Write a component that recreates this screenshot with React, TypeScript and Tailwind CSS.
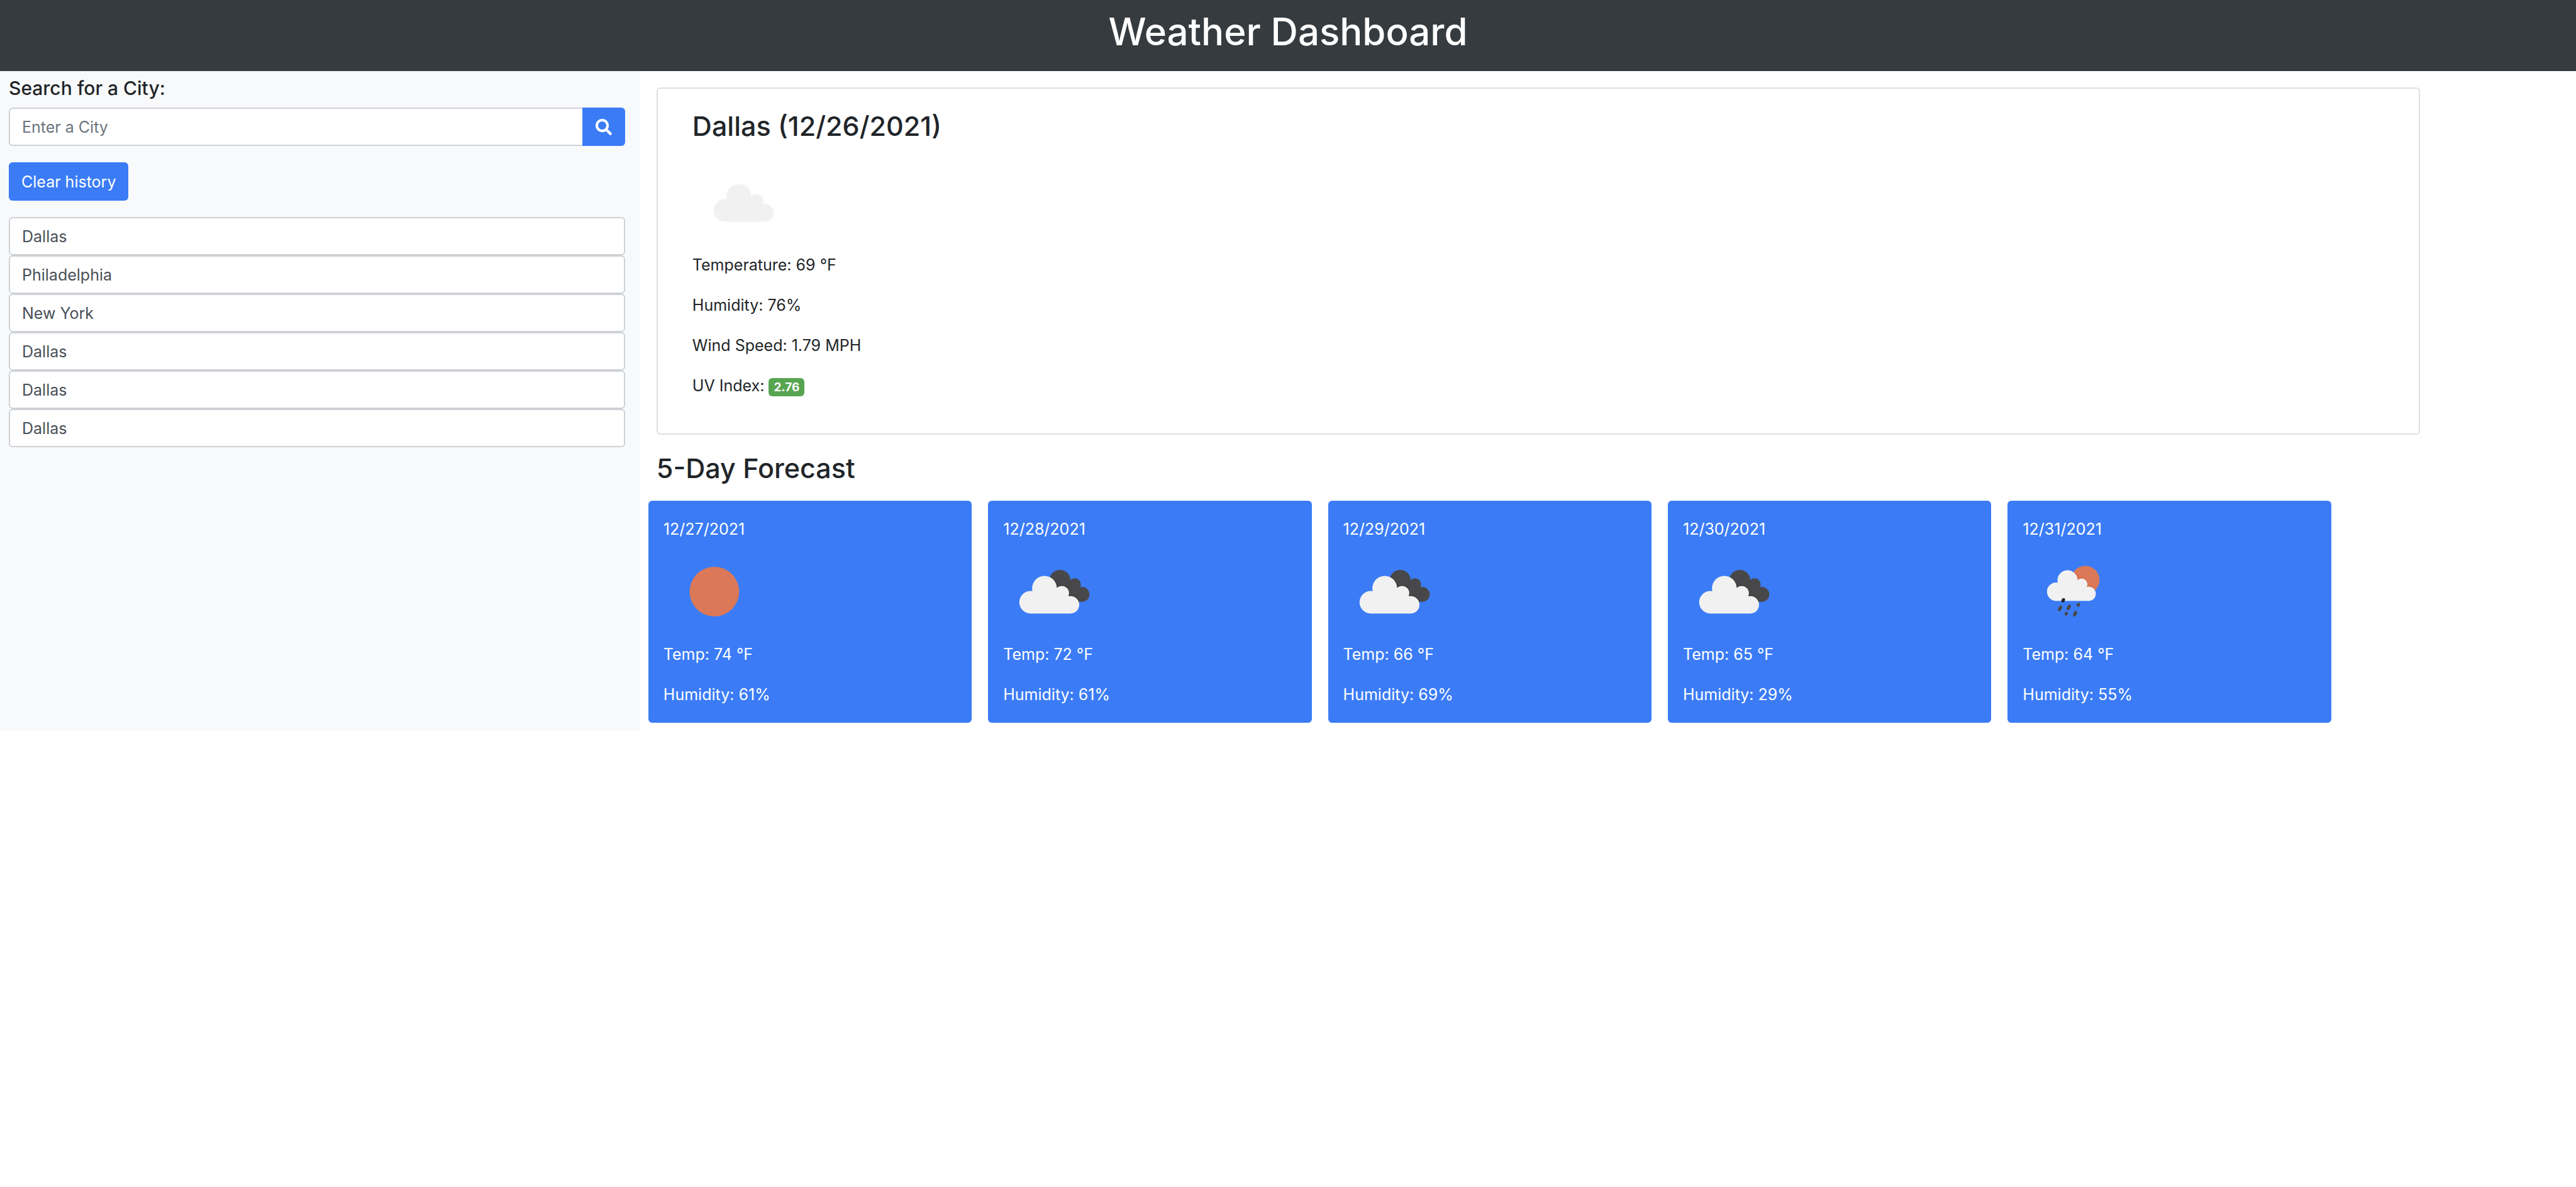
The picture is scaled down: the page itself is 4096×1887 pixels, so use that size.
import React from "react";
import { FaSearch } from "react-icons/fa";

type Sky = "clear" | "scattered" | "broken" | "rain";

const history = ["Dallas", "Philadelphia", "New York", "Dallas", "Dallas", "Dallas"];

const forecast: { date: string; sky: Sky; temp: number; humidity: number }[] = [
  { date: "12/27/2021", sky: "clear", temp: 74, humidity: 61 },
  { date: "12/28/2021", sky: "broken", temp: 72, humidity: 61 },
  { date: "12/29/2021", sky: "broken", temp: 66, humidity: 69 },
  { date: "12/30/2021", sky: "broken", temp: 65, humidity: 29 },
  { date: "12/31/2021", sky: "rain", temp: 64, humidity: 55 },
];

const SUN = "#da7857";
const CLOUD = "#f1f1f1";
const DARK = "#48484a";

// Puffs of one cloud on the 200 x 200 icon grid
function Cloud() {
  return (
    <>
      <circle cx="64.3" cy="116" r="22.3" />
      <circle cx="91.8" cy="88.5" r="24.5" />
      <circle cx="126" cy="98" r="14.3" />
      <circle cx="143" cy="121" r="17.3" />
      <rect x="64" y="105" width="79" height="33.3" />
      <rect x="71" y="92" width="67" height="30" />
    </>
  );
}

function WeatherIcon({ sky, label }: { sky: Sky; label: string }) {
  const id = React.useId();
  return (
    <svg viewBox="0 0 200 200" className="block size-[161px]" role="img" aria-label={label}>
      {sky === "clear" && <circle cx="100.5" cy="100" r="49" fill={SUN} />}
      {sky === "scattered" && (
        <g fill={CLOUD}>
          <Cloud />
        </g>
      )}
      {sky === "broken" && (
        <>
          <mask id={id}>
            <g fill="#fff" transform="translate(34.3 2.6) scale(0.85)">
              <Cloud />
            </g>
          </mask>
          <g mask={`url(#${id})`}>
            <rect width="200" height="200" fill={DARK} />
            <g transform="translate(-10 5)" fill="#333" stroke="#333" strokeWidth="3">
              <Cloud />
            </g>
          </g>
          <g fill={CLOUD} transform="translate(-10 5)">
            <Cloud />
          </g>
        </>
      )}
      {sky === "rain" && (
        <>
          <mask id={id}>
            <circle cx="124" cy="77" r="28" fill="#fff" />
          </mask>
          <g mask={`url(#${id})`}>
            <rect width="200" height="200" fill={SUN} />
            <g transform="translate(14 5.6) scale(0.815)" fill="#d05f42" stroke="#d05f42" strokeWidth="3">
              <Cloud />
            </g>
          </g>
          <g fill={CLOUD} transform="translate(14 5.6) scale(0.815)">
            <Cloud />
          </g>
          <g stroke={DARK} strokeWidth="6.4" strokeLinecap="round">
            <path d="M79.8 118.2l1-2.2" stroke="#222" />
            <path d="M72.8 135.6l2.3-4.8" />
            <path d="M90.2 133.4l2.3-4.8" />
            <path d="M109.9 126.8l.8-1.4" />
            <path d="M86.1 144l.5-.8" />
            <path d="M102.6 146l2.3-4.6" />
          </g>
        </>
      )}
    </svg>
  );
}

export default function App() {
  return (
    <div className="min-h-screen bg-white font-[Inter,sans-serif] text-[25px] leading-[38px] text-[#212529]">
      <header className="h-[113px] bg-[#363b3f] pt-3 text-center text-white">
        <h1 className="text-[60px] leading-[77px] font-medium">Weather Dashboard</h1>
      </header>

      <div className="flex">
        <aside className="w-[24.85%] shrink-0 bg-[#f8f9fb] pt-2 pr-6 pl-[14px]">
          <h2 className="text-[30px] leading-[38px] font-medium">
            <label htmlFor="city">Search for a City:</label>
          </h2>
          <form className="mt-3 flex h-[61px]" onSubmit={(e) => e.preventDefault()}>
            <input
              id="city"
              type="text"
              placeholder="Enter a City"
              className="min-w-0 flex-1 rounded-l-md border-2 border-r-0 border-[#ced2d6] bg-white px-[19px] placeholder:text-[#6c757d]"
            />
            <button
              type="submit"
              aria-label="Search"
              className="flex w-[68px] items-center justify-center rounded-r-md bg-[#3b7cf6] text-white"
            >
              <FaSearch className="size-[26px]" />
            </button>
          </form>
          <button type="button" className="mt-[26px] block h-[61px] rounded-md bg-[#3b7cf6] px-5 text-white">
            Clear history
          </button>
          <div className="mt-[26px]">
            {history.map((city, i) => (
              <input
                key={i}
                type="text"
                readOnly
                aria-label={`Search history ${i + 1}`}
                defaultValue={city}
                className="block h-[61px] w-full rounded-md border-2 border-[#ced2d6] bg-white px-[19px] text-[#495057]"
              />
            ))}
          </div>
        </aside>

        <main className="flex-1 pt-[26px] pb-[13px] pl-[13px]">
          <section className="ml-[13px] w-[91.5%] rounded-md border-2 border-[#dfdfdf] px-[55px] pt-8 pb-[57px]">
            <h3 className="mb-[14px] text-[43px] leading-[54px] font-medium">Dallas (12/26/2021)</h3>
            <WeatherIcon sky="scattered" label="Scattered clouds" />
            <div className="flex flex-col gap-[26px]">
              <p>Temperature: 69 °F</p>
              <p>Humidity: 76%</p>
              <p>Wind Speed: 1.79 MPH</p>
              <p className="flex items-center gap-[7px]">
                UV Index:
                <span className="mt-1 rounded-md bg-[#57a551] px-2 text-[19px] leading-[29px] font-bold text-white">2.76</span>
              </p>
            </div>
          </section>

          <h3 className="mt-[26px] mb-[25px] ml-[13px] text-[43px] leading-[54px] font-medium">5-Day Forecast</h3>
          <div className="grid w-[87.3%] grid-cols-5 gap-[26px]">
            {forecast.map((day) => (
              <article key={day.date} className="rounded-md bg-[#3b7cf6] px-6 py-[26px] text-white">
                <p>{day.date}</p>
                <WeatherIcon sky={day.sky} label={day.sky} />
                <p>Temp: {day.temp} °F</p>
                <p className="mt-[26px]">Humidity: {day.humidity}%</p>
              </article>
            ))}
          </div>
        </main>
      </div>
    </div>
  );
}
